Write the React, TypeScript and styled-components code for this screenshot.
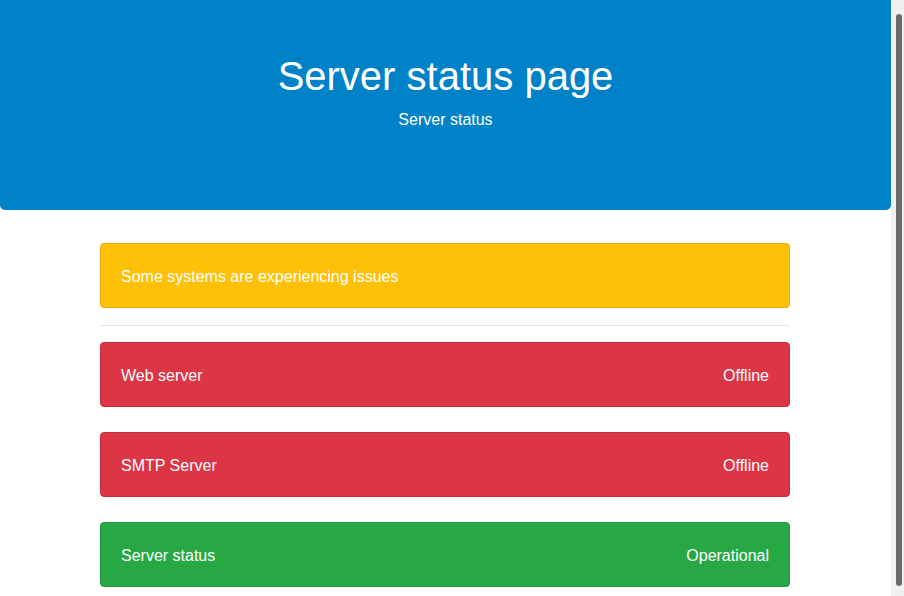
import React from "react";
import styled, { createGlobalStyle } from "styled-components";

const GlobalStyle = createGlobalStyle`
  html, body {
    margin: 0;
    padding: 0;
    background: #ffffff;
    font-family: "Liberation Sans", Arial, Helvetica, sans-serif;
    color: #212529;
  }
  * { box-sizing: border-box; }
`;

const Page = styled.div`
  margin-right: 13px;
`;

const ScrollTrack = styled.div`
  position: fixed;
  top: 0;
  right: 0;
  bottom: 0;
  width: 13px;
  background: #f0f0f0;
  padding: 14px 2px 10px 5px;
`;

const ScrollThumb = styled.div`
  height: 100%;
  background: #6b6b6b;
  border-radius: 3px;
`;

const Header = styled.header`
  background: #0082c9;
  color: #ffffff;
  height: 210px;
  padding: 52px 32px 0;
  border-radius: 0 0 5px 5px;
  text-align: center;
`;

const Title = styled.h1`
  margin: 0 0 8px;
  font-size: 40px;
  line-height: 48px;
  font-weight: 400;
`;

const Subtitle = styled.p`
  margin: 0;
  font-size: 16px;
  line-height: 24px;
`;

const Main = styled.main`
  padding: 33px 1px 32px 0;
`;

const Container = styled.div`
  width: 690px;
  margin: 0 auto;
  display: flex;
  flex-direction: column;
`;

type Variant = "warning" | "danger" | "success";

const palette: Record<Variant, { bg: string; border: string }> = {
  warning: { bg: "#ffc107", border: "#e6ad06" },
  danger: { bg: "#dc3545", border: "#c62f3e" },
  success: { bg: "#28a745", border: "#24963e" },
};

const Alert = styled.div<{ $variant: Variant; $gap?: number }>`
  height: 65px;
  padding: 2px 20px 0;
  display: flex;
  align-items: center;
  justify-content: space-between;
  background: ${(p) => palette[p.$variant].bg};
  border: 1px solid ${(p) => palette[p.$variant].border};
  border-radius: 4px;
  color: #ffffff;
  font-size: 16px;
  line-height: 24px;
  margin-bottom: ${(p) => p.$gap ?? 0}px;
`;

const Divider = styled.hr`
  margin: 17px 0 16px;
  border: 0;
  border-top: 1px solid #e5e5e5;
  height: 0;
`;

const services: { name: string; status: string; variant: Variant }[] = [
  { name: "Web server", status: "Offline", variant: "danger" },
  { name: "SMTP Server", status: "Offline", variant: "danger" },
  { name: "Server status", status: "Operational", variant: "success" },
];

export default function App() {
  return (
    <>
      <GlobalStyle />
      <Page>
        <Header>
          <Title>Server status page</Title>
          <Subtitle>Server status</Subtitle>
        </Header>
        <Main>
          <Container>
            <Alert $variant="warning">
              <span>Some systems are experiencing issues</span>
            </Alert>
            <Divider />
            {services.map((s, i) => (
              <Alert
                key={s.name}
                $variant={s.variant}
                $gap={i < services.length - 1 ? 25 : 0}
              >
                <span>{s.name}</span>
                <span>{s.status}</span>
              </Alert>
            ))}
          </Container>
        </Main>
      </Page>
      <ScrollTrack aria-hidden="true">
        <ScrollThumb />
      </ScrollTrack>
    </>
  );
}
